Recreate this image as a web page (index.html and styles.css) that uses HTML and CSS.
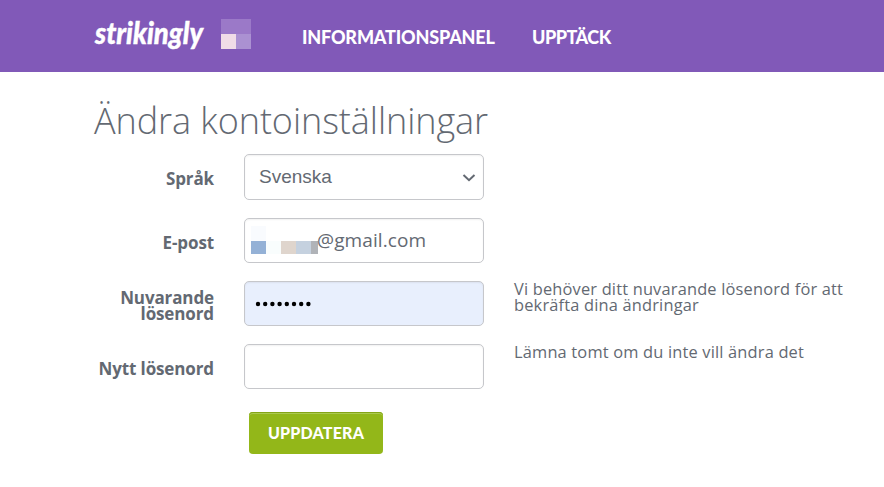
FILE: index.html
```html
<!DOCTYPE html>
<html lang="sv">
<head>
<meta charset="utf-8">
<title>Kontoinställningar</title>
<link rel="stylesheet" href="styles.css">
</head>
<body>
<header class="topbar">
  <svg class="logo" width="112" height="48" viewBox="0 0 112 48"><text x="1" y="33" textLength="108" lengthAdjust="spacingAndGlyphs">strikingly</text></svg>
  <div class="avatar"><i></i><i></i><i></i></div>
  <nav class="nav"><a class="panel">INFORMATIONSPANEL</a><a class="discover">UPPTÄCK</a></nav>
</header>
<main class="settings">
  <h1><span>Ändra kontoinställningar</span></h1>
  <form class="form">
    <div class="row language">
      <label>Språk</label>
      <div class="field select"><span>Svenska</span><svg width="14" height="8" viewBox="0 0 14 8"><path d="M1.5 1 7 6.2 12.5 1"/></svg></div>
    </div>
    <div class="row">
      <label>E-post</label>
      <div class="field email"><div class="mosaic"><i></i><i></i><i></i><i></i><i></i><i></i></div><span>@gmail.com</span></div>
    </div>
    <div class="row current">
      <label>Nuvarande lösenord</label>
      <div class="field password"><svg width="58" height="6" viewBox="0 0 58 6"><circle cx="3" cy="3" r="2.2"/><circle cx="10.2" cy="3" r="2.2"/><circle cx="17.4" cy="3" r="2.2"/><circle cx="24.6" cy="3" r="2.2"/><circle cx="31.8" cy="3" r="2.2"/><circle cx="39" cy="3" r="2.2"/><circle cx="46.2" cy="3" r="2.2"/><circle cx="53.4" cy="3" r="2.2"/></svg></div>
      <p>Vi behöver ditt nuvarande lösenord för att<br>bekräfta dina ändringar</p>
    </div>
    <div class="row">
      <label>Nytt lösenord</label>
      <div class="field"></div>
      <p>Lämna tomt om du inte vill ändra det</p>
    </div>
    <button type="button"><span>UPPDATERA</span></button>
  </form>
</main>
</body>
</html>
```
FILE: styles.css
```css
* { box-sizing: border-box; }
body { margin: 0; background: #fff; color: #636972; font-family: "Open Sans", sans-serif; }
.topbar { height: 72px; background: #8159b8; display: flex; align-items: flex-start; padding-left: 94px; }
.logo { margin-top: 11px; overflow: visible; }
.logo text { font: italic 900 30px Lato, sans-serif; fill: #fff; stroke: #fff; stroke-width: 0.4; }
.avatar { width: 30px; height: 30px; margin: 19px 0 0 15px; display: grid; grid-template: 15px 15px / 15px 15px; }
.avatar i:nth-child(1) { grid-column: 1 / 3; background: #9b79c8; }
.avatar i:nth-child(2) { background: #f0dce7; }
.avatar i:nth-child(3) { background: #ab91d2; }
.nav { display: flex; margin: 25px 0 0 51px; gap: 37px; color: #fff; font: 900 18px/24px Lato, sans-serif; letter-spacing: -0.17px; }
.discover { letter-spacing: -0.5px; }
.panel { width: 193px; white-space: nowrap; }
.settings { padding: 0 0 0 94px; }
h1 { margin: 0; padding-top: 22px; height: 82px; font-size: 36px; line-height: 53px; font-weight: 300; letter-spacing: -0.07px; white-space: nowrap; }
.form { display: flex; flex-direction: column; align-items: flex-start; }
.row { display: grid; grid-template-columns: 120px 240px 360px; column-gap: 30px; height: 45px; margin-bottom: 18px; }
.row.language { height: 46px; }
label { align-self: center; padding-top: 4px; text-align: right; font-weight: 700; font-size: 17px; line-height: 16px; letter-spacing: -0.12px; }
.field { display: flex; align-items: center; border: 1px solid #c6c7cb; border-radius: 5px; box-shadow: inset 0 1px 2px #0000000f; background: #fff; font-size: 19px; }
.select { justify-content: space-between; padding: 0 7px 0 14px; font-family: "Liberation Sans", sans-serif; }
.select span { margin-top: -1px; }
.select svg { margin-top: 1px; }
.select path { fill: none; stroke: #636972; stroke-width: 2; }
.email { padding-left: 6px; }
.email span { margin: -2px 0 0 -1px; letter-spacing: 0.1px; }
.mosaic { width: 67px; height: 28px; margin-top: -1px; display: grid; grid-template: 15px 13px / 15px 15px 15px 15px 7px; }
.mosaic i:nth-child(1) { background: #f9fbfe; }
.mosaic i:nth-child(2) { grid-area: 2 / 1; background: #94b1d6; }
.mosaic i:nth-child(3) { grid-area: 2 / 2; background: #f9fdfd; }
.mosaic i:nth-child(4) { grid-area: 2 / 3; background: #dfd5cd; }
.mosaic i:nth-child(5) { grid-area: 2 / 4; background: #c5d1df; }
.mosaic i:nth-child(6) { grid-area: 2 / 5; background: #b0b3b8; }
.password { background: #e8effd; padding: 0 0 0 10px; }
.row p { margin: 0; font-size: 16.4px; line-height: 16px; letter-spacing: 0.18px; white-space: nowrap; }
button { width: 134px; height: 42px; margin: 5px 0 0 155px; padding: 0 0 1px; border: 0; border-radius: 4px; background: #93b719; box-shadow: inset 0 1px #84a516, inset 0 2px #abc950; color: #fff; font: 900 16px/41px Lato, sans-serif; letter-spacing: 0.2px; }
```
